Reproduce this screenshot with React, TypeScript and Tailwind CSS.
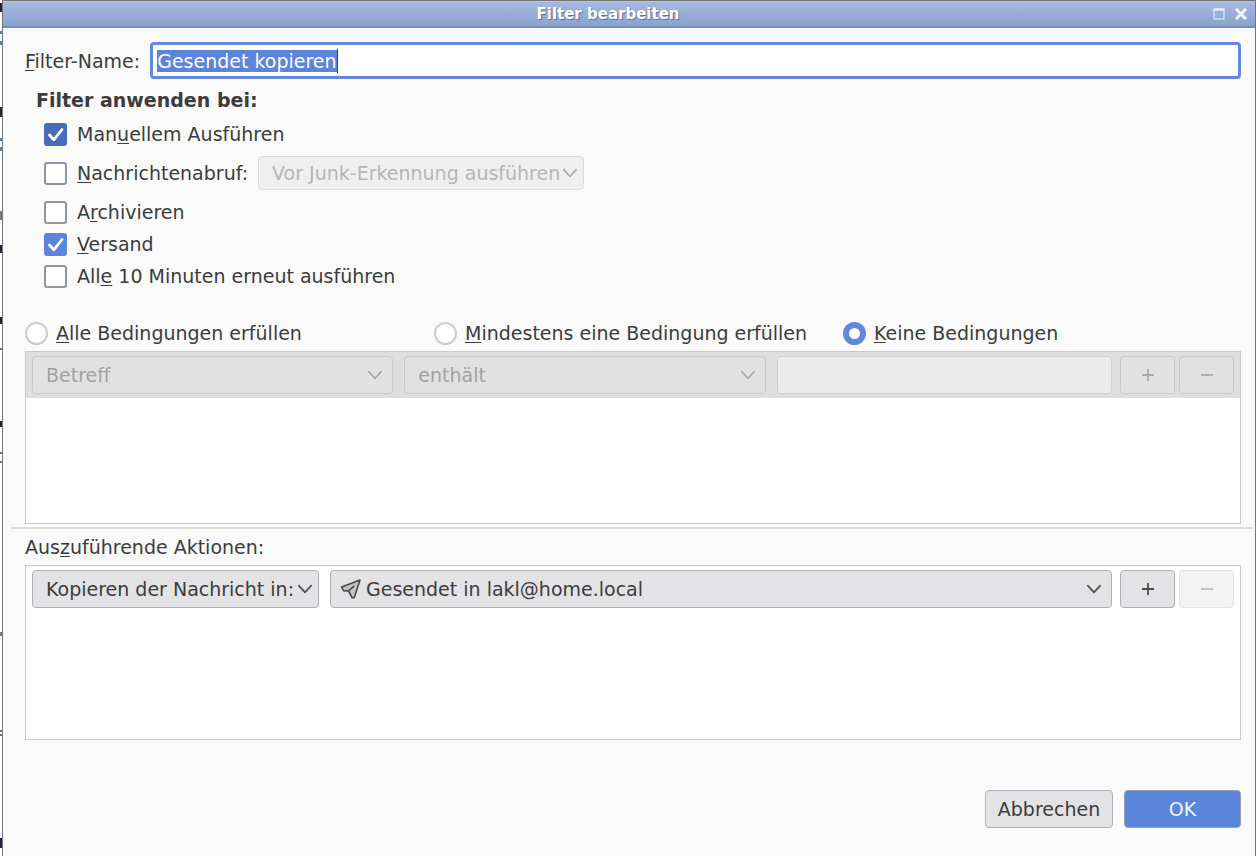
import { useEffect, useRef } from "react";
import type { ReactNode, SVGProps } from "react";

function Key({ children }: { children: ReactNode }) {
  return <span className="underline decoration-1 underline-offset-2">{children}</span>;
}

function Chevron({ className = "" }: { className?: string }) {
  return (
    <svg
      aria-hidden="true"
      viewBox="0 0 16 16"
      className={`pointer-events-none absolute size-4 ${className}`}
      fill="none"
      stroke="currentColor"
      strokeWidth="1.6"
      strokeLinecap="round"
      strokeLinejoin="round"
    >
      <path d="M1.800 4.600 8 11.400l6.200-6.800" />
    </svg>
  );
}

function Plane(props: SVGProps<SVGSVGElement>) {
  return (
    <svg aria-hidden="true" viewBox="0 0 22 22" {...props}>
      <path
        d="M20 2 1.500 9l2 3.600 5 .4 3.800 7 2-.6Z"
        fill="#c4c4c6"
        stroke="#4c4c4c"
        strokeWidth="1.600"
        strokeLinejoin="round"
      />
      <path d="M8.500 13 13.800 8.300" stroke="#4c4c4c" strokeWidth="1.600" strokeLinecap="round" />
    </svg>
  );
}

type SelectProps = {
  label: string;
  value: string;
  disabled?: boolean;
  tone?: string;
  wrap?: string;
  pad?: string;
  chevron?: string;
  children?: ReactNode;
};

function Select({
  label,
  value,
  disabled,
  tone = "h-[38px] border-[#b0b0b9] bg-[#e3e3e5] text-[#3c3c3c]",
  wrap = "",
  pad = "pl-[13px]",
  chevron = "right-2.5",
  children,
}: SelectProps) {
  return (
    <div className={`relative flex items-center ${wrap}`}>
      <select
        aria-label={label}
        disabled={disabled}
        className={`w-full appearance-none rounded-[4px] border pr-5 opacity-100 ${pad} ${tone}`}
      >
        <option>{value}</option>
      </select>
      {children}
      <Chevron className={`${chevron} ${disabled ? "text-[#aaaaaa]" : "text-[#4c4c4c]"}`} />
    </div>
  );
}

function StepButton({ sign, label, tone, disabled }: { sign: "+" | "-"; label: string; tone: string; disabled?: boolean }) {
  return (
    <button
      type="button"
      aria-label={label}
      disabled={disabled}
      className={`flex h-[38px] w-[55px] items-center justify-center rounded-[4px] border ${tone}`}
    >
      <svg aria-hidden="true" viewBox="0 0 14 14" className="size-3.5" stroke="currentColor" strokeWidth="1.8">
        <path d={sign === "+" ? "M1 7h12M7 1v12" : "M1 7h12"} />
      </svg>
    </button>
  );
}

function Check({ checked, tone = "checked:bg-[#5b84dc]", children }: { checked?: boolean; tone?: string; children: ReactNode }) {
  return (
    <label className="flex items-center gap-2.5">
      <span className="relative mt-px flex">
        <input
          type="checkbox"
          defaultChecked={checked}
          className={`peer size-[23px] appearance-none rounded-[3px] border-2 border-[#9593a2] bg-white checked:border-0 ${tone}`}
        />
        <svg
          aria-hidden="true"
          viewBox="0 0 23 23"
          className="pointer-events-none absolute inset-0 hidden size-[23px] peer-checked:block"
          fill="none"
          stroke="white"
          strokeWidth="2.800"
          strokeLinecap="round"
          strokeLinejoin="round"
        >
          <path d="m5.500 12 4.300 4.800L18 6.500" />
        </svg>
      </span>
      <span>{children}</span>
    </label>
  );
}

function Radio({ checked, wrap = "", children }: { checked?: boolean; wrap?: string; children: ReactNode }) {
  return (
    <label className={`flex items-center gap-2 ${wrap}`}>
      <input
        type="radio"
        name="match"
        defaultChecked={checked}
        className="mt-0.5 size-[23px] shrink-0 appearance-none rounded-full border-2 border-[#cfccc5] bg-white checked:border-[6px] checked:border-[#5f88de]"
      />
      <span>{children}</span>
    </label>
  );
}

const dimButton = "border-[#cacacd] bg-[#e1e1e1] text-[#a9a9a9]";
const dimSelect = "h-[38px] border-[#cacacd] bg-[#e1e1e1] text-[#a3a3a3]";

export default function App() {
  const nameRef = useRef<HTMLInputElement>(null);

  useEffect(() => {
    nameRef.current?.focus();
    nameRef.current?.select();
  }, []);

  return (
    <div className="flex min-h-screen bg-white font-['DejaVu_Sans',sans-serif] text-[19px] leading-6 text-[#3c3c3c]">
      <svg aria-hidden="true" className="w-0.5 shrink-0 self-stretch">
        <path d="M1 3v9M1 107v10M1 245v8M1 317v7M1 421v6M1 838v10" stroke="#25213f" strokeWidth="2" />
        <path d="M1 31v3M1 41v4M1 138v3M1 147v4" stroke="#4f7fd6" strokeWidth="2" />
        <path d="M1 211v9M1 348v2M1 452v2M1 461v2M1 632v4M1 730v2M1 734v2" stroke="#777488" strokeWidth="2" />
      </svg>
      <main className="flex min-w-0 flex-1 flex-col border-t border-r border-l border-[#747474] bg-[#fafafa]">
        <header className="flex h-[27px] items-center border-t border-b-2 border-t-[#b1c7ef] border-b-[#758eba] bg-linear-to-b from-[#a6b8df] to-[#8ba3d0] px-2 text-white">
          <h1 className="flex-1 pr-2 text-center text-[15px] leading-5 font-bold [text-shadow:1px_1px_1px_#5b6f99]">
            Filter bearbeiten
          </h1>
          <div className="flex gap-2.5">
            <button type="button" aria-label="Maximieren">
              <svg viewBox="0 0 12 12" className="size-3" fill="none" stroke="#e6edfa">
                <path d="M1 1.500h10v9.500H1Z" strokeWidth="1.200" />
                <path d="M.5 1.500h11" strokeWidth="2.500" />
              </svg>
            </button>
            <button type="button" aria-label="Schließen">
              <svg viewBox="0 0 12 12" className="size-3" stroke="#f0f4fc" strokeWidth="3">
                <path d="m1 1 10 10M11 1 1 11" />
              </svg>
            </button>
          </div>
        </header>

        <form className="flex flex-1 flex-col pt-3.5 pr-3.5 pl-[22px]" onSubmit={(e) => e.preventDefault()}>
          <div className="flex items-center gap-2.5">
            <label htmlFor="filter-name">
              <Key>F</Key>ilter-Name:
            </label>
            <div className="relative flex min-w-0 flex-1">
              <input
                id="filter-name"
                ref={nameRef}
                defaultValue="Gesendet kopieren"
                className="h-[37px] min-w-0 flex-1 rounded-[4px] border-[3px] border-[#5f8ae0] bg-white px-1 outline-none selection:bg-[#5b84dc] selection:text-white"
              />
              <span aria-hidden="true" className="pointer-events-none absolute top-[7px] left-[187px] h-6 w-px bg-[#3c3c3c]" />
            </div>
          </div>

          <fieldset className="pl-[11px]">
            <legend className="pt-[9px] font-bold">Filter anwenden bei:</legend>
            <div className="flex flex-col items-start gap-2 pt-2.5 pl-2">
              <Check checked tone="checked:bg-[#466dba]">
                Man<Key>u</Key>ellem Ausführen
              </Check>
              <div className="flex items-center gap-2.5 py-0.5">
                <Check>
                  <Key>N</Key>achrichtenabruf:
                </Check>
                <Select
                  label="Zeitpunkt der Ausführung"
                  value="Vor Junk-Erkennung ausführen"
                  disabled
                  wrap="w-[326px]"
                  chevron="right-1.5"
                  tone="h-[34px] border-[#dcdcdc] bg-[#efefef] text-[#b6b6b6]"
                />
              </div>
              <Check>
                A<Key>r</Key>chivieren
              </Check>
              <Check checked>
                <Key>V</Key>ersand
              </Check>
              <Check>
                All<Key>e</Key> 10 Minuten erneut ausführen
              </Check>
            </div>
          </fieldset>

          <div className="flex pt-8">
            <Radio wrap="w-[409px]">
              <Key>A</Key>lle Bedingungen erfüllen
            </Radio>
            <Radio wrap="w-[409px]">
              <Key>M</Key>indestens eine Bedingung erfüllen
            </Radio>
            <Radio checked>
              <Key>K</Key>eine Bedingungen
            </Radio>
          </div>

          <section className="mt-1.5 h-[173px] border border-[#cbc9c3] bg-white">
            <div className="flex bg-[#dedede] px-1.5 py-1">
              <Select label="Kopfzeile" value="Betreff" disabled wrap="mr-[11px] flex-[362]" tone={dimSelect} />
              <Select label="Vergleich" value="enthält" disabled wrap="mr-[11px] flex-[362]" tone={dimSelect} />
              <input
                aria-label="Suchwert"
                disabled
                className="mr-2 h-[38px] min-w-0 flex-[334] rounded-[4px] border border-[#d0d0d1] bg-[#ebebeb]"
              />
              <div className="flex gap-1">
                <StepButton sign="+" label="Bedingung hinzufügen" tone={dimButton} disabled />
                <StepButton sign="-" label="Bedingung entfernen" tone={dimButton} disabled />
              </div>
            </div>
          </section>

          <hr className="mt-[3px] -mr-3 -ml-3.5 border-t-2 border-[#dcd9d6]" />

          <h2 className="pt-1.5">
            Aus<Key>z</Key>uführende Aktionen:
          </h2>
          <section className="mt-1.5 h-[175px] border border-[#cbc9c3] bg-white">
            <div className="flex px-1.5 py-1">
              <Select
                label="Aktion"
                value="Kopieren der Nachricht in:"
                wrap="mr-[11px] w-[287px]"
                chevron="right-1.5"
              />
              <Select
                label="Zielordner"
                value="Gesendet in lakl@home.local"
                wrap="mr-2 flex-1"
                pad="pl-[35px]"
              >
                <Plane className="pointer-events-none absolute left-2.5 size-[22px]" />
              </Select>
              <div className="flex gap-1">
                <StepButton sign="+" label="Aktion hinzufügen" tone="border-[#b0b0b9] bg-[#e3e3e5] text-[#4c4c4c]" />
                <StepButton sign="-" label="Aktion entfernen" tone="border-[#e3e3e4] bg-[#f3f3f3] text-[#bdbdbd]" disabled />
              </div>
            </div>
          </section>

          <footer className="mt-auto flex justify-end gap-[11px] pb-7">
            <button type="button" className="h-[38px] w-32 rounded-[4px] border border-[#b0b0b9] bg-[#e3e3e5]">
              Abbrechen
            </button>
            <button type="submit" className="h-[38px] w-[117px] rounded-[4px] border border-[#9a9fb4] bg-[#5b84dc] text-[#f2f5fd]">
              OK
            </button>
          </footer>
        </form>
      </main>
    </div>
  );
}
